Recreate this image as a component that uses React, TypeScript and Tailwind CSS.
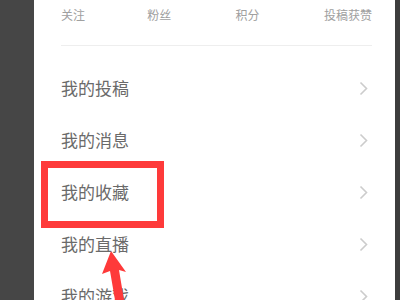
const stats = [
  { label: "关注", value: "12" },
  { label: "粉丝", value: "36" },
  { label: "积分", value: "120" },
  { label: "投稿获赞", value: "58" },
];

const menu = ["我的投稿", "我的消息", "我的收藏", "我的直播", "我的游戏"];

function Chevron() {
  return (
    <svg width="9" height="15" viewBox="0 0 9 15" className="mr-[4px]">
      <polyline
        points="1.5,1.5 7.5,7.5 1.5,13.5"
        fill="none"
        stroke="#cccccc"
        strokeWidth="1.6"
      />
    </svg>
  );
}

export default function App() {
  return (
    <div
      className="relative flex h-[300px] w-[400px] overflow-hidden bg-[#464646]"
      style={{ fontFamily: '"Noto Sans CJK SC", "Noto Sans", sans-serif' }}
    >
      <div className="w-[34px] shrink-0" />

      <div className="relative flex-1 bg-white pl-[27px] pr-[23px]">
        {/* stats row, numbers mostly scrolled out of view */}
        <div className="-mt-[19px] flex justify-between">
          {stats.map((s) => (
            <div key={s.label} className="flex flex-col items-center">
              <span className="text-[16px] font-bold leading-[20px] text-[#555555]">
                {s.value}
              </span>
              <span className="mt-[6px] text-[12px] leading-[16px] text-[#a0a0a0]">
                {s.label}
              </span>
            </div>
          ))}
        </div>

        <div className="mt-[22px] h-px bg-[#eeeeee]" />

        <div className="mt-[16px] flex flex-col">
          {menu.map((m) => (
            <div key={m} className="flex h-[52px] items-center justify-between">
              <span className="text-[17px] text-[#6a6a6a]">{m}</span>
              <Chevron />
            </div>
          ))}
        </div>

        <div className="absolute left-[7px] top-[161px] h-[67px] w-[123px] border-[7px] border-[#fe3a3a]" />
      </div>

      <div className="w-[5px] shrink-0 bg-[#3d3d3d]" />

      <svg
        className="pointer-events-none absolute left-0 top-0"
        width="400"
        height="300"
        viewBox="0 0 400 300"
      >
        <polygon
          points="111,251 102,274 110,271 115,300 124,300 119,270 126,272"
          fill="#fe3a3a"
        />
      </svg>
    </div>
  );
}
